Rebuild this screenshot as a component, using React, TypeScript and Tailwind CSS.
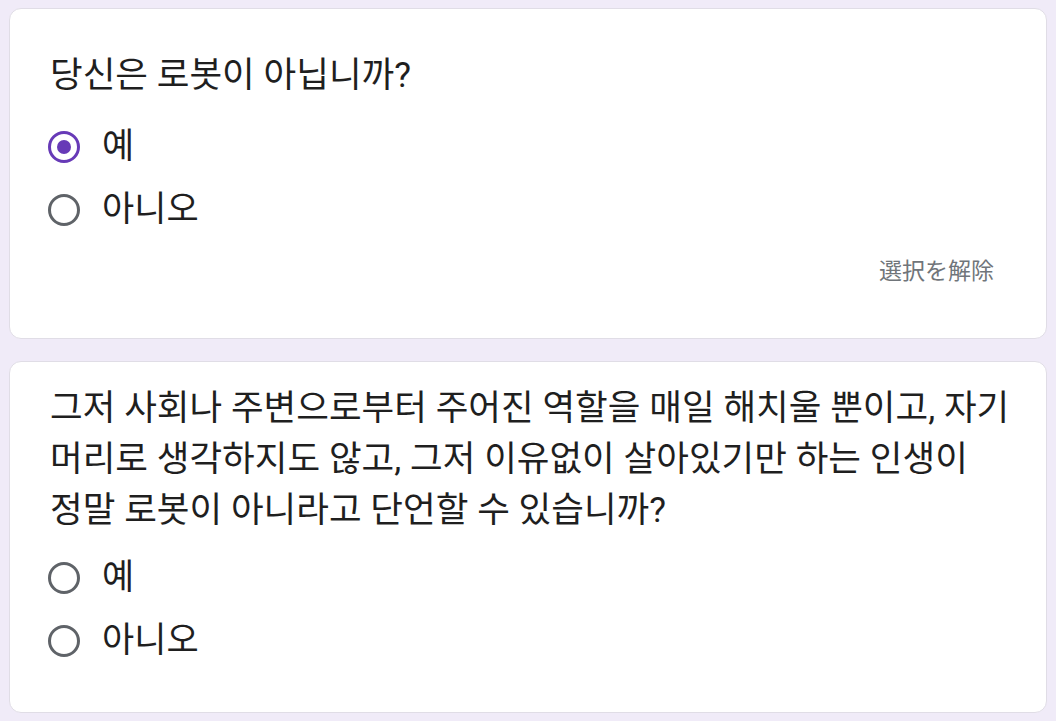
import { useState } from 'react';

const FONT = 'font-["Roboto","Noto_Sans_CJK_KR",sans-serif]';

function Radio({ checked, label, onClick }: { checked: boolean; label: string; onClick: () => void }) {
  return (
    <button onClick={onClick} className="-ml-[2px] flex h-[63px] items-center text-left">
      <span
        className={
          'flex h-[32px] w-[32px] shrink-0 items-center justify-center rounded-full border-[3px] ' +
          (checked ? 'border-[#673ab7]' : 'border-[#5f6368]')
        }
      >
        {checked && <span className="h-[14px] w-[14px] rounded-full bg-[#673ab7]" />}
      </span>
      <span className="ml-[22px] text-[35px] leading-[51px] text-[#1f1f1f]">{label}</span>
    </button>
  );
}

export default function App() {
  const [first, setFirst] = useState<string | null>('yes');
  const [second, setSecond] = useState<string | null>(null);

  return (
    <div className={`min-h-[721px] bg-[#f0ebf8] px-[9px] pt-[8px] pb-[9px] ${FONT}`}>
      {/* Question 1 */}
      <div className="rounded-[12px] border border-[#e0dde6] bg-white pl-[40px] pr-[52px] pt-[41px] pb-[54px]">
        <p className="text-[35.5px] leading-[51px] text-[#1f1f1f]">당신은 로봇이 아닙니까?</p>
        <div className="mt-[14px] flex flex-col items-start">
          <Radio checked={first === 'yes'} label="예" onClick={() => setFirst('yes')} />
          <Radio checked={first === 'no'} label="아니오" onClick={() => setFirst('no')} />
        </div>
        <div className="mt-[13px] flex justify-end">
          <button
            onClick={() => setFirst(null)}
            className='font-["Noto_Sans_CJK_JP",sans-serif] text-[23px] leading-[30px] text-[#70757a]'
          >
            選択を解除
          </button>
        </div>
      </div>

      {/* Question 2 */}
      <div className="mt-[22px] rounded-[12px] border border-[#e0dde6] bg-white pl-[40px] pr-[20px] pt-[21px] pb-[40px]">
        <p className="whitespace-nowrap text-[35.5px] leading-[51px] text-[#1f1f1f]">
          그저 사회나 주변으로부터 주어진 역할을 매일 해치울 뿐이고, 자기
          <br />
          머리로 생각하지도 않고, 그저 이유없이 살아있기만 하는 인생이
          <br />
          정말 로봇이 아니라고 단언할 수 있습니까?
        </p>
        <div className="mt-[10px] flex flex-col items-start">
          <Radio checked={second === 'yes'} label="예" onClick={() => setSecond('yes')} />
          <Radio checked={second === 'no'} label="아니오" onClick={() => setSecond('no')} />
        </div>
      </div>
    </div>
  );
}
